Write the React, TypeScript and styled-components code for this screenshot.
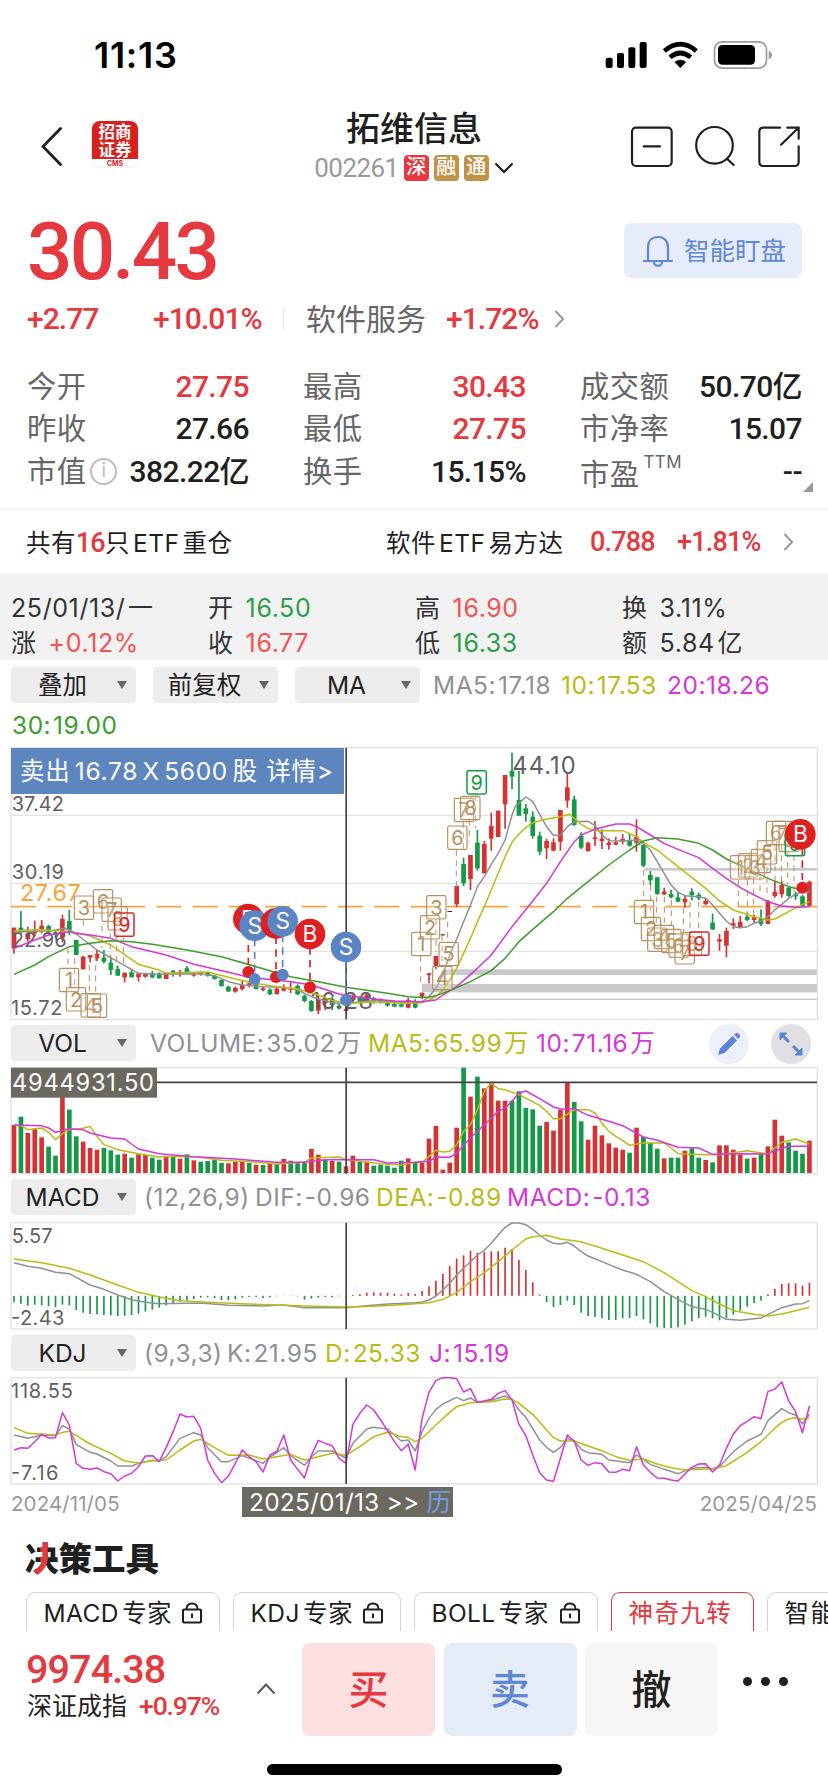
import React from "react";
import styled, { createGlobalStyle } from "styled-components";

const RED = "#e4393f";
const UP = "#d53234";
const DOWN = "#149a46";
const BLUE = "#5b84c2";
const GRAY = "#8d9095";
const YELLOW = "#b9bb14";
const PINK = "#d536d8";
const GREEN = "#3c9d2b";
const TAN = "#b68f5c";
const INK = "#1f1f1f";
const SANS = `Inter, "Noto Sans CJK SC", sans-serif`;
const DIN = `Roboto, "Noto Sans CJK SC", sans-serif`;

const Global = createGlobalStyle`
  * { box-sizing: border-box; }
  body { margin: 0; background: #fff; }
`;

const Screen = styled.div`
  width: 828px;
  height: 1792px;
  overflow: hidden;
  background: #fff;
  color: ${INK};
  font-family: ${SANS};
  display: flex;
  flex-direction: column;
  white-space: nowrap;
`;

const StatusBar = styled.div`
  height: 108px;
  flex: none;
  display: flex;
  justify-content: space-between;
  padding: 0 48px 0 94px;
`;
const Clock = styled.div`
  margin-top: 33px;
  font-size: 36px;
  line-height: 44px;
  font-weight: 600;
  letter-spacing: 0.7px;
  color: #000;
`;

const NavBar = styled.header`
  height: 88px;
  flex: none;
  display: flex;
  justify-content: space-between;
  padding: 0 27px 0 41px;
`;
const NavSide = styled.div`
  display: flex;
  width: 176px;
`;
const Logo = styled.div`
  width: 46px;
  height: 46px;
  margin: 13px 0 0 30px;
  border-radius: 8px;
  overflow: hidden;
  background: linear-gradient(#d8201f 0 38.5px, #fff 38.5px);
  box-shadow: 0 0 2px rgba(0, 0, 0, 0.2);
  color: #fff;
  font: 700 16.5px/18px ${SANS};
  text-align: center;
`;
const LogoLine = styled.div`
  height: 17.5px;
  &:first-child { margin-top: 2px; }
`;
const LogoMark = styled.div`
  font-size: 7px;
  line-height: 12px;
  color: #d8201f;
`;
const NavTitle = styled.div`
  display: flex;
  flex-direction: column;
  align-items: center;
`;
const StockName = styled.h1`
  margin: 0;
  font: 500 34px/42px ${SANS};
`;
const StockCode = styled.div`
  display: flex;
  align-items: center;
  height: 36px;
  font: 400 26px/36px ${DIN};
  letter-spacing: -0.55px;
  color: #999;
`;
const Tag = styled.span<{ $bg: string }>`
  width: 25px;
  height: 26px;
  margin-left: 5px;
  border-radius: 4px;
  background: ${(p) => p.$bg};
  color: #fff;
  font: 500 20px/25px ${SANS};
  letter-spacing: 0;
  text-align: center;
`;

const PriceRow = styled.div`
  height: 96px;
  flex: none;
  display: flex;
  justify-content: space-between;
  padding: 0 26px 0 27px;
`;
const Price = styled.div`
  font: 500 80px/112px ${DIN};
  letter-spacing: -2.8px;
  color: ${RED};
`;
const WatchButton = styled.button`
  width: 178px;
  height: 55px;
  margin-top: 27px;
  padding: 0 0 0 18px;
  border: 0;
  border-radius: 8px;
  background: #e6ecf9;
  color: #5f87d8;
  display: flex;
  align-items: center;
  gap: 10px;
  font: 400 25.5px/36px ${SANS};
`;

const ChangeRow = styled.div`
  height: 56px;
  flex: none;
  display: flex;
  align-items: center;
  padding: 0 0 2px 27px;
`;
const Change = styled.span<{ $w: number }>`
  width: ${(p) => p.$w}px;
  font: 500 30px/36px ${DIN};
  letter-spacing: -0.95px;
  color: ${RED};
`;
const Divider = styled.i`
  width: 1px;
  height: 22px;
  margin-right: 22px;
  background: #e6e6e6;
`;
const Sector = styled.span`
  width: 140px;
  font-size: 30px;
  line-height: 36px;
  color: #666;
`;

const Stats = styled.section`
  height: 162px;
  flex: none;
  padding: 17.5px 26px 0 27px;
  display: grid;
  grid-template-columns: 222px 223px 222px;
  grid-auto-rows: 42.6px;
  column-gap: 54px;
  position: relative;
  border-bottom: 2px solid #f5f5f5;
`;
const Stat = styled.div`
  display: flex;
  align-items: center;
  justify-content: space-between;
`;
const StatLabel = styled.span<{ $drop?: boolean }>`
  display: flex;
  align-items: center;
  margin-top: ${(p) => (p.$drop ? 6 : 0)}px;
  font-size: 29.3px;
  line-height: 36px;
  letter-spacing: 0.4px;
  color: #666;
  sup {
    align-self: flex-start;
    margin: -5px 0 0 4px;
    font-size: 17px;
    line-height: 20px;
  }
`;
const StatValue = styled.span<{ $up?: boolean }>`
  font: 500 30px/36px ${DIN};
  letter-spacing: -0.6px;
  color: ${(p) => (p.$up ? RED : INK)};
`;
const InfoDot = styled.i`
  width: 27px;
  height: 27px;
  margin-left: 4px;
  border: 2px solid #bbb;
  border-radius: 50%;
  font: 400 19px/22px ${SANS};
  color: #bbb;
  text-align: center;
`;
const Corner = styled.i`
  position: absolute;
  right: 15px;
  bottom: 16px;
  border: 5.5px solid #999;
  border-left-color: transparent;
  border-top-color: transparent;
`;

const EtfRow = styled.div`
  height: 63px;
  flex: none;
  display: flex;
  align-items: center;
  padding: 0 34px 0 26px;
  font-size: 24.5px;
  letter-spacing: 0.4px;
  word-spacing: -4px;
  b { font-weight: 500; color: ${RED}; font-family: ${DIN}; font-size: 27px; letter-spacing: -0.8px; }
`;
const EtfCount = styled.span`
  width: 360px;
`;
const EtfName = styled.span`
  width: 204px;
`;
const EtfValue = styled.b<{ $w: number }>`
  width: ${(p) => p.$w}px;
`;

const DayPanel = styled.section`
  height: 87px;
  flex: none;
  padding: 17px 12px 0 11px;
  background: #f2f2f2;
  display: grid;
  grid-template-columns: 197px 207px 207px 1fr;
  grid-auto-rows: 35px;
  font-size: 25px;
  line-height: 36px;
  letter-spacing: 0.6px;
  word-spacing: -5px;
  color: #333;
`;
const DayCell = styled.div<{ $c?: string }>`
  display: flex;
  gap: 12px;
  span { color: ${(p) => p.$c || "#333"}; }
`;

const ToolRow = styled.div<{ $h: number; $top: number }>`
  height: ${(p) => p.$h}px;
  flex: none;
  padding: ${(p) => p.$top}px 0 0 11px;
  display: flex;
`;
const Picker = styled.button<{ $mr: number }>`
  width: 125px;
  height: 36px;
  flex: none;
  margin-right: ${(p) => p.$mr}px;
  padding: 0 9px 0 0;
  border: 0;
  border-radius: 4px;
  background: #ededed;
  color: #222;
  font: 400 24.5px/36px ${SANS};
  display: flex;
  align-items: center;
`;
const PickerText = styled.span`
  flex: 1;
  padding-right: 3px;
  text-align: center;
`;
const Caret = styled.i`
  border: 5.5px solid transparent;
  border-top: 8px solid #666;
  border-bottom: 0;
`;
const Legend = styled.span<{ $c: string; $w?: number }>`
  flex: none;
  width: ${(p) => (p.$w ? p.$w + "px" : "auto")};
  font-size: 24.5px;
  line-height: 37px;
  letter-spacing: 0.5px;
  word-spacing: -5.5px;
  color: ${(p) => p.$c};
`;
const LegendLine = styled.div`
  height: 43px;
  flex: none;
  padding: 3px 0 0 12px;
`;
const RoundButton = styled.button<{ $bg: string; $ml: number }>`
  width: 40px;
  height: 40px;
  flex: none;
  margin: -1px 0 0 ${(p) => p.$ml}px;
  padding: 0;
  border: 0;
  border-radius: 50%;
  background: ${(p) => p.$bg};
  display: grid;
  place-items: center;
`;

const ChartBox = styled.div`
  position: relative;
  flex: none;
`;
const ChartSvg = styled.svg`
  display: block;
  font-family: ${SANS};
  overflow: visible;
`;
const TradeTip = styled.div`
  position: absolute;
  left: 11px;
  top: 1px;
  width: 333px;
  height: 46px;
  padding-left: 9px;
  background: #5d86be;
  color: #fff;
  font-size: 24.5px;
  line-height: 47px;
  letter-spacing: 0.7px;
  word-spacing: -3.2px;
  white-space: pre;
`;

const DateRow = styled.div`
  height: 49px;
  flex: none;
  padding: 2px 11px 0;
  display: flex;
  font-size: 20.5px;
  line-height: 34px;
  letter-spacing: 0.1px;
  color: #999;
`;
const StartDate = styled.span`
  width: 231px;
`;
const EndDate = styled.span`
  margin-left: auto;
`;
const DatePill = styled.span`
  width: 211px;
  height: 30px;
  padding-left: 7px;
  background: #6b6860;
  color: #fff;
  font-size: 24.5px;
  line-height: 31px;
  letter-spacing: 0.2px;
  em { font-style: normal; color: #6d9fe8; }
`;

const ToolsTitle = styled.h2`
  height: 58px;
  flex: none;
  margin: 0;
  padding-left: 25px;
  font: 900 33.5px/50px ${SANS};
`;
const AccentGlyph = styled.span`
  display: inline-block;
  position: relative;
  line-height: 50px;
  vertical-align: top;
  &::after {
    content: "决";
    position: absolute;
    left: 0;
    top: 0;
    color: ${RED};
    clip-path: polygon(46% 0, 68% 0, 68% 52%, 52% 100%, 22% 100%, 22% 70%, 46% 60%);
  }
`;
const Chips = styled.div`
  height: 39px;
  flex: none;
  padding: 0 0 0 25.5px;
  display: flex;
  gap: 13px;
  overflow: hidden;
`;
const Chip = styled.button<{ $w: number; $on?: boolean; $ls?: number }>`
  width: ${(p) => p.$w}px;
  height: 50px;
  flex: none;
  padding: 0 17px 8px 17px;
  border: 1.5px solid ${(p) => (p.$on ? RED : "#d2d2d2")};
  border-radius: 9px;
  background: #fff;
  color: ${(p) => (p.$on ? RED : INK)};
  font: 400 24.5px/36px ${SANS};
  letter-spacing: ${(p) => p.$ls ?? 0.4}px;
  word-spacing: -4px;
  display: flex;
  align-items: center;
  justify-content: space-between;
`;

const TradeBar = styled.footer`
  height: 119px;
  flex: none;
  padding: 12px 0 0 27px;
  display: flex;
`;
const IndexBlock = styled.div`
  width: 275px;
  position: relative;
`;
const IndexValue = styled.div`
  margin-left: -1px;
  font: 500 39.5px/54px ${DIN};
  letter-spacing: -0.9px;
  color: ${RED};
`;
const IndexName = styled.div`
  display: flex;
  font-size: 25px;
  line-height: 18px;
  b { margin-left: 12px; font: 500 26.5px/18px ${DIN}; letter-spacing: -1.1px; color: ${RED}; }
`;
const Expand = styled.svg`
  position: absolute;
  left: 229px;
  top: 40px;
`;
const TradeButton = styled.button<{ $bg: string; $c: string }>`
  width: 133px;
  height: 93px;
  margin-right: 8.5px;
  border: 0;
  padding: 0;
  border-radius: 8px;
  background: ${(p) => p.$bg};
  color: ${(p) => p.$c};
  font: 500 40px/93px ${SANS};
`;
const Dots = styled.div`
  display: flex;
  gap: 9px;
  margin: 34px 0 0 16px;
  i { width: 9px; height: 9px; border-radius: 50%; background: ${INK}; }
`;
const HomeBar = styled.div`
  width: 295px;
  height: 11px;
  flex: none;
  margin: 14px 0 0 267px;
  border-radius: 6px;
  background: #000;
`;

/* Charts are drawn in units of a third of a pixel; one candle every 20.75 units. */
const cx = (i: number) => 42 + 20.75 * i;
type Pt = [number, number];
const parse = (s: string): Pt[] =>
  s.trim().split(/\s+/).map((p) => p.split(",").map(Number) as Pt);

const Line = ({ d, c }: { d: string; c: string }) => (
  <polyline
    points={parse(d).map(([i, y]) => `${cx(i)},${y}`).join(" ")}
    fill="none"
    stroke={c}
    strokeWidth={4.5}
    strokeLinejoin="round"
  />
);

const candles = `r,578,578,640,656 g,528,578,592,595 r,575,595,612,620 r,557,585,595,605 r,555,572,583,595 g,570,573,590,598
g,585,592,600,610 r,540,552,608,622 g,525,558,585,600 g,615,615,660,660 r,663,665,703,703 r,660,660,668,682 r,645,657,670,678
g,645,668,680,685 g,665,683,705,720 g,692,702,722,722 r,713,713,727,742 g,703,712,727,727 r,713,716,727,740 r,713,717,725,728
g,708,715,727,730 g,712,715,730,730 r,712,714,732,732 g,705,708,712,725 r,705,710,714,725 g,693,700,713,715 r,713,716,722,725
r,710,713,718,722 g,711,713,722,725 g,720,722,732,734 g,733,735,753,755 g,752,755,769,771 r,755,759,770,773 r,738,750,762,767
r,738,745,753,757 g,738,742,762,763 r,755,760,765,769 g,760,764,778,780 r,757,761,777,779 r,748,757,767,769 r,742,760,764,774
g,748,752,778,780 g,779,782,798,802 g,795,798,828,830 r,783,795,827,837 r,785,790,805,825 g,785,792,810,825 g,803,812,820,823
r,800,822,828,832 r,780,785,795,805 g,785,788,798,805 r,775,780,795,800 g,785,790,800,806 g,790,795,802,806 g,797,803,812,815
g,797,807,815,817 g,800,808,815,817 r,788,795,818,820 g,793,800,818,820 r,772,774,785,792 r,713,715,720,745 r,662,663,693,703
k,598,598,601,601 k,528,528,531,531 r,453,453,508,516 g,368,387,445,453 r,360,360,432,465 g,285,323,400,407 r,318,327,415,415
r,233,273,311,347 r,227,227,306,306 r,120,120,208,281 g,53,108,125,162 g,108,195,242,242 g,207,220,237,260 g,229,245,303,311
g,290,302,350,360 r,312,318,340,372 r,310,322,347,349 r,225,225,320,347 r,115,157,197,218 g,182,193,270,272 g,292,302,338,342
r,320,323,348,350 r,258,307,312,333 r,283,311,318,342 r,310,323,330,344 r,305,322,329,330 r,297,312,320,328 g,297,315,332,335
r,253,305,323,350 g,320,330,392,397 g,408,420,436,450 g,426,427,477,479 r,458,470,478,480 g,465,477,487,490 g,470,487,500,502
r,482,492,502,518 g,460,470,480,495 g,473,480,490,495 r,490,498,507,511 g,536,563,583,585 r,597,613,620,647 r,578,588,632,667
r,550,565,572,582 r,543,560,577,578 g,535,545,555,558 r,540,547,555,563 g,523,550,567,573 r,495,497,567,567 r,437,470,483,488
r,437,450,478,488 g,455,458,483,487 g,470,478,484,495 g,480,484,515,517 r,437,440,512,515`
  .trim().split(/\s+/).map((s) => {
    const [k, ...v] = s.split(",");
    return { k, v: v.map(Number) };
  });
const tone: Record<string, string> = { r: UP, g: DOWN, k: "#333" };

const MA5 = "0,590 2,590 4,588 5.5,587 7.2,580 8,585 9,597 12,645 15,680 18,715 20,718 24,716 27,717 29,722 31,740 33,750 36,755 39,757 41,765 43,785 46,803 48,806 50,800 52,797 55,800 58,805 59,800 60,785 61,760 62,720 63,660 64,612 65,560 66,510 67,455 68,425 69,388 70,355 71,315 72,240 72.5,213 74,186 75,200 76,238 77,275 78,301 79,300 80,275 81,260 83,259 84,272 85,300 86,317 88,318 90,315 91,325 92,345 93,380 94,415 95,450 96,472 97,482 99,485 100,490 101,510 102,535 103,558 104,575 105,578 106,575 107,565 108,558 109,545 110,525 111,508 112,490 113,478 114,470 115,470";
const MA10 = "0,588 2,585 4,584 7,588 9,593 11,603 14,630 18,688 21,706 22,714 28,711 31,727 34,742 38,755 41,762 44,780 46,797 49,805 52,800 56,805 59,803 60,795 61,785 62,765 63,735 64,700 65,655 66,610 67,560 68,515 69,465 70,415 71,365 72,322 73,297 74,278 75,263 77,252 79,245 80.3,238 81,250 82,268 83,280 84,287 88,287 90,305 91,323 93,345 96,395 100,460 102,498 104,525 107,545 109,555 110,552 112,530 114,508 115,500";
const MA20 = "0,640 3,615 5,600 8,590 9,595 11,600 14,610 17,635 22,660 26,688 31,712 34,727 40,740 43,750 47,777 51,790 55,798 59,800 61,795 62,780 64,755 67,700 69,660 72,575 75,498 77,445 79,380 81,320 82,300 84,283 86,272 87,267 89,267 90,275 92,300 94,325 96,343 99,368 101,400 103,430 105,458 107,480 109,500 111,513 113,517 115,515";
const MA30 = "0,718 3,690 5,665 8,635 11,625 14,617 17,620 20,628 25,645 30,665 35,695 40,725 44,740 48,757 54,775 57,785 58,787 60,787 61,782 63,767 66,740 69,707 71,670 73,620 76,565 78,530 80,490 83,440 86,390 89,345 91,318 93,308 96,312 99,325 101,345 103,372 106,400 109,430 112,455 114,465 115,463";

const T = TAN;
const marks: [string, number, number, string][] = [
  ["3", 252, 518, T], ["6", 309, 499, T], ["7", 335, 524, T], ["8", 353, 550, T], ["9", 373, 569, "#d52b2b"],
  ["1", 207, 735, T], ["2", 228, 793, T], ["4", 272, 811, T], ["5", 291, 812, T],
  ["1", 1264, 627, T], ["2", 1290, 577, T], ["3", 1309, 517, T], ["4", 1327, 729, T], ["5", 1346, 657, T],
  ["6", 1372, 308, T], ["7", 1392, 225, T], ["8", 1411, 219, T], ["9", 1430, 142, DOWN],
  ["1", 1932, 531, T], ["2", 1953, 582, T], ["3", 1972, 614, T], ["4", 1992, 606, T], ["5", 2014, 618, T],
  ["6", 2036, 632, T], ["7", 2054, 652, T], ["8", 2076, 627, T], ["9", 2098, 626, "#d52b2b"],
  ["1", 2220, 397, T], ["2", 2245, 391, T], ["3", 2264, 397, T], ["4", 2283, 378, T], ["5", 2301, 352, T],
  ["6", 2328, 294, T], ["7", 2347, 294, T], ["8", 2366, 315, T], ["9", 2385, 327, DOWN],
];
const drops = parse("250,555,575 306,572,640 331,595,680 350,600,700 370,605,690 204,640,700 224,670,760 268,690,775 287,660,775 1262,662,750 1369,345,455 1390,262,350 1408,255,320 1427,180,280 1343,560,620 1308,553,650 1326,600,690 1931,405,495 1952,450,545 1970,485,580 1993,485,572 2014,495,580 2050,520,600 2070,500,590 2096,500,590 2215,435,520 2242,435,535 2261,430,545 2280,420,470 2301,395,475 2325,330,440 2344,330,440 2363,350,455 2382,360,470") as unknown as [number, number, number][];

const trades: [string, number, number, number, string][] = [
  ["B", 745, 552, 711, "#de2022"], ["S", 764, 572, 732, BLUE], ["B", 828, 565, 726, "#de2022"],
  ["S", 848, 559, 719, BLUE], ["B", 930, 597, 757, "#de2022"], ["S", 1038, 636, 795, BLUE], ["B", 2401, 298, 458, "#de2022"],
];

const PriceChart = () => (
  <ChartBox>
    <ChartSvg width="828" height="278" viewBox="0 36 2484 834">
      <g fill="#c9c9c9">
        <rect x="1266" y="747" width="1185" height="25" />
        <rect x="1330" y="703" width="1121" height="17" />
        <rect x="1933" y="399" width="518" height="8" />
        <rect x="1290" y="791" width="1161" height="4" />
      </g>
      <g stroke="#e2e2e2" strokeWidth="4" fill="none">
        <path d="M33 241H2452M33 445H2452M33 649H2452" />
        <rect x="33" y="38" width="2419" height="815" />
      </g>
      <path d="M33 515H2451" stroke="#f6a540" strokeWidth="5" strokeDasharray="75 34" />
      <text x="60" y="498" fontSize="70" fill="#f6a540" textLength="182">27.67</text>
      {candles.map(({ k, v }, i) => (
        <g key={i} fill={tone[k]}>
          <rect x={cx(i) - 2.5} y={v[0]} width="5" height={v[3] - v[0]} />
          <rect x={cx(i) - 7} y={v[1]} width="14" height={v[2] - v[1]} />
        </g>
      ))}
      <g fill="#5f5f5f" fontSize="60">
        <text x="35" y="229" textLength="157">37.42</text>
        <text x="35" y="433" textLength="157">30.19</text>
        <text x="35" y="637" textLength="165">22.96</text>
        <text x="33" y="841" textLength="154">15.72</text>
        <text x="1537" y="116" fontSize="71" textLength="190">44.10</text>
        <text x="932" y="822" fontSize="70" textLength="187">16.28</text>
      </g>
      <Line d={MA5} c={GRAY} />
      <Line d={MA10} c={YELLOW} />
      <Line d={MA20} c={PINK} />
      <Line d={MA30} c={GREEN} />
      {drops.map(([x, a, b], i) => (
        <path key={i} d={`M${x} ${a}V${b}`} stroke={TAN} strokeWidth="3" strokeDasharray="17 14" />
      ))}
      {marks.map(([n, x, y, c], i) => (
        <g key={i}>
          <rect x={x - 29} y={y - 35} width="58" height="70" rx="5" fill="#fff" fillOpacity="0.2" stroke={c} strokeWidth={c === T ? 3.5 : 4.5} />
          <text x={x} y={y + 22} fontSize="60" fill={c} textAnchor="middle">{n}</text>
        </g>
      ))}
      <path d="M1038.5 38V853" stroke="#444" strokeWidth="5" />
      {trades.map(([n, x, y, dot, c], i) => (
        <g key={i}>
          <path d={`M${x + (i === 6 ? 6 : 0)} ${y + 40}V${dot}`} stroke={c} strokeWidth="5" strokeDasharray="22 16" />
          <circle cx={x + (i === 6 ? 6 : 0)} cy={dot} r="18" fill={c} />
          <circle cx={x} cy={y} r="46" fill={c} />
          <text x={x} y={y + 24} fontSize="68" fill="#fff" textAnchor="middle">{n}</text>
        </g>
      ))}
    </ChartSvg>
    <TradeTip>{"卖出 16.78 X 5600 股  详情>"}</TradeTip>
  </ChartBox>
);

const volumes = "r316 g291 r340 r327 r353 g381 g408 r230 g270 g350 r366 r385 r390 g385 g392 g405 r402 g414 r404 r406 g414 g420 r410 g411 r417 g404 r422 g426 g424 g420 g430 r431 r427 r426 g430 r435 g436 r432 g433 r418 g423 g428 g430 r388 r405 g420 r424 g426 r440 r408 g426 r426 g438 g435 g438 g444 g423 r416 g430 r430 r357 r319 r450 r429 r324 g144 r231 g171 r206 r190 r243 r243 g243 g215 g265 g269 g318 r307 r333 r270 r190 g247 g305 r360 r318 r347 r371 r384 r390 g399 r324 g352 g370 g387 r416 g414 g414 r393 g386 g414 r421 g428 r377 r377 r390 r405 g417 r414 g403 r380 r300 r348 g368 g393 g402 r363".split(" ");

const VolumeChart = () => (
  <ChartSvg width="828" height="108" viewBox="0 142 2484 324">
    <rect x="33" y="144" width="2419" height="318" fill="none" stroke="#e2e2e2" strokeWidth="4" />
    {volumes.map((v, i) => (
      <rect key={i} x={cx(i) - 7} width="14" y={+v.slice(1)} height={460 - +v.slice(1)} fill={tone[v[0]]} />
    ))}
    <Line c={YELLOW} d="0,316 1,318 2,330 4,325 5,338 6,360 7,342 8,330 9,328 10,326 11,320 12,350 13,375 15,390 18,402 21,412 24,410 27,413 30,422 34,426 38,433 42,428 43,415 47,412 48,420 50,425 53,432 56,436 58,428 59,428 60,410 61,392 62,397 63,395 64,375 65,335 66,315 67,270 68,215 69,190 70,207 71,210 73,225 76,257 77,275 78,297 79,297 81,270 83,270 84,280 85,310 86,335 87,350 88,362 89,377 91,370 94,370 95,385 96,402 100,405 102,405 106,393 109,403 110,385 111,368 113,358 115,373" />
    <Line c={PINK} d="0,316 4,318 5,325 6,338 8,327 10,330 11,340 14,355 16,358 18,388 21,402 26,411 32,418 38,428 42,428 45,420 52,420 54,430 58,428 60,425 61,412 63,413 64,400 66,355 68,315 70,275 71,265 72,245 73,220 74,214 76,237 78,262 79,268 81,267 83,287 86,305 88,318 91,352 93,362 96,383 99,385 101,404 105,402 109,403 110,393 112,380 115,380" />
    <path d="M471 188H2451M1038.5 144V462" stroke="#444" strokeWidth="5" />
    <rect x="33" y="144" width="438" height="90" fill="#6b6860" />
    <text x="36" y="215" fontSize="71" fill="#fff" textLength="426">4944931.50</text>
  </ChartSvg>
);

const macdBars = "127 131 137 134 136 138 141 134 136 150 158 162 163 165 166 168 167 165 161 155 149 143 136 130 125 121 117 113 112 114 120 121 118 113 111 111 114 112 109 108 108 109 119 116 113 111 112 109 110 105 103 98 97 98 98 101 103 99 102 93 79 62 42 18 -4 -14 -28 -22 -24 -26 -26 -37 -33 0 30 67 104 126 141 135 122 135 158 168 171 175 180 180 175 174 168 178 190 202 204 204 202 194 184 174 170 175 181 174 164 152 140 129 122 103 87 72 70 70 77 68".split(" ").map(Number);

const MacdChart = () => (
  <ChartSvg width="828" height="108" viewBox="0 -114 2484 324">
    <rect x="33" y="-112" width="2419" height="319" fill="none" stroke="#e2e2e2" strokeWidth="4" />
    {macdBars.map((y, i) => (
      <rect key={i} x={cx(i) - 2.5} width="5" y={Math.min(y, 107.5)} height={Math.abs(107.5 - y)} fill={y > 107 ? DOWN : UP} />
    ))}
    <Line c={GRAY} d="0,8 2,19 4,25 6,37 8,41 9,52 11,75 13,88 15,105 17,119 19,127 21,131 27,129 31,136 36,138 39,135 42,143 48,143 51,137 54,132 58,128 59,126 60,120 61,108 62,90 63,70 64,45 65,25 66,5 67,-15 68,-30 69,-50 70,-75 71,-98 72,-111 73,-111 74,-106 75,-92 76,-75 77,-60 78,-50 79,-48 80,-53 81,-42 82,-25 83,-12 85,5 87,22 88,30 90,43 92,65 94,95 96,118 98,140 100,148 101,157 103,178 105,181 108,174 111,143 113,132 114,131 115,122" />
    <Line c={YELLOW} d="0,-3 4,8 8,25 11,45 15,75 18,97 21,111 24,122 28,127 34,132 42,138 48,141 52,139 56,134 60,128 62,118 64,98 66,65 68,38 70,5 72,-30 74,-63 75,-70 77,-74 79,-63 82,-55 85,-35 88,-15 91,5 94,38 96,65 98,92 100,110 102,132 104,152 107,163 109,168 111,162 113,152 115,142" />
    <g fill="#5f5f5f" fontSize="60">
      <text x="35" y="-52" textLength="123">5.57</text>
      <text x="33" y="195" textLength="160">-2.43</text>
    </g>
    <path d="M1038.5 -112V207" stroke="#444" strokeWidth="5" />
  </ChartSvg>
);

const KdjChart = () => (
  <ChartSvg width="828" height="108" viewBox="0 351 2484 324">
    <rect x="33" y="353" width="2419" height="319" fill="none" stroke="#e2e2e2" strokeWidth="4" />
    <Line c={GRAY} d="0,525 2,535 4,525 6,527 7,497 8,507 9,553 11,577 12,582 14,603 15,618 17,618 18,610 20,601 21,604 22,590 24,535 26,518 27,525 28,563 30,605 31,605 33,587 36,610 37,592 39,563 40,587 42,616 43,590 44,573 46,573 48,594 49,550 51,507 52,502 54,507 56,543 57,540 58,573 59,515 60,475 61,448 62,432 63,422 64,412 65,422 66,414 67,427 69,421 71,408 72,418 73,450 74,472 76,540 77,562 78,577 79,562 80,535 81,543 82,568 83,578 85,583 86,600 89,608 90,585 92,613 94,628 96,641 98,625 100,622 101,627 102,620 104,575 106,543 108,523 109,482 111,446 112,458 113,465 114,492 115,462" />
    <Line c={YELLOW} d="0,503 2,520 6,525 7,517 8,514 11,552 14,580 16,603 18,609 20,602 22,600 24,570 26,543 27,538 29,563 31,586 34,585 36,597 38,590 40,583 42,600 44,590 46,580 48,586 50,560 52,530 54,517 56,530 57,532 58,545 59,535 61,495 63,457 64,440 66,428 69,425 71,417 72,418 73,430 75,463 77,510 78,533 79,543 81,543 83,558 85,572 87,590 89,601 91,597 93,612 95,623 97,630 101,626 103,617 106,577 108,545 110,505 111,487 112,477 113,473 114,478 115,474" />
    <Line c={PINK} d="0,570 1,563 2,565 3,545 4,523 5,534 6,533 7,458 8,495 9,610 10,625 11,628 12,624 13,635 14,641 15,663 16,648 17,640 18,620 19,588 20,587 21,604 22,563 23,515 24,462 25,471 26,469 27,505 28,600 29,640 30,668 31,648 32,610 33,570 34,590 35,605 36,636 37,585 38,574 39,525 40,600 41,628 42,654 43,585 44,541 45,550 46,557 47,595 48,610 49,493 50,460 51,435 52,450 53,480 54,512 55,545 56,572 57,552 58,630 59,475 60,397 61,362 62,353 63,353 64,356 65,396 66,386 67,427 68,423 69,418 70,400 71,392 72,420 73,493 74,527 75,585 76,638 77,660 78,664 79,595 80,525 81,543 82,600 83,616 84,608 85,611 86,636 87,637 88,628 89,632 90,560 91,615 92,637 93,654 94,655 95,660 96,663 97,642 98,622 99,612 100,611 101,636 102,615 103,565 104,522 105,497 106,484 107,470 108,476 109,395 110,387 111,366 112,423 113,455 114,518 115,438" />
    <g fill="#5f5f5f" fontSize="60">
      <text x="33" y="413" textLength="186">118.55</text>
      <text x="33" y="659" textLength="142">-7.16</text>
    </g>
    <path d="M1038.5 353V672" stroke="#444" strokeWidth="5" />
  </ChartSvg>
);

const Chevron = ({ ml = 0 }: { ml?: number }) => (
  <svg width="11" height="18" viewBox="0 0 11 18" style={{ marginLeft: ml }}>
    <path d="M1.5 1L9 9L1.5 17" fill="none" stroke="#999" strokeWidth="2" />
  </svg>
);
const Lock = () => (
  <svg width="20" height="22" viewBox="0 0 20 22" fill="none" stroke={INK} strokeWidth="2">
    <rect x="1" y="7.5" width="18" height="13" rx="1" />
    <path d="M4.5 7.5C4.5 3.5 7 1.5 10 1.5S15.5 3.5 15.5 7.5M10 11.5V16" />
  </svg>
);
const Pick = ({ label, mr }: { label: string; mr: number }) => (
  <Picker $mr={mr}>
    <PickerText>{label}</PickerText>
    <Caret />
  </Picker>
);

const stats: [string, string, boolean][] = [
  ["今开", "27.75", true], ["最高", "30.43", true], ["成交额", "50.70亿", false],
  ["昨收", "27.66", false], ["最低", "27.75", true], ["市净率", "15.07", false],
  ["市值", "382.22亿", false], ["换手", "15.15%", false], ["市盈", "--", false],
];

export default function App() {
  return (
    <Screen>
      <Global />
      <StatusBar>
        <Clock>11:13</Clock>
        <svg width="180" height="44" viewBox="0 6 540 132" style={{ marginTop: 32 }}>
          <g>
            <rect x="17" y="83" width="21" height="31" rx="6" />
            <rect x="51" y="69" width="21" height="45" rx="6" />
            <rect x="85" y="52" width="21" height="62" rx="6" />
            <rect x="119" y="36" width="21" height="78" rx="6" />
          </g>
          <path d="M241 114L224 96Q241 84 258 96Z" stroke="#000" strokeWidth="1" />
          <g fill="none" stroke="#000" strokeWidth="14">
            <path d="M193 63Q241 22 289 63" />
            <path d="M210 82Q241 56 272 82" />
          </g>
          <rect x="343.5" y="35.5" width="156" height="79" rx="23" fill="none" stroke="#9b9b9b" strokeWidth="5" />
          <rect x="354" y="45" width="111" height="59" rx="13" />
          <path d="M506 62Q516 66 516 75T506 88Z" fill="#9b9b9b" />
        </svg>
      </StatusBar>

      <NavBar>
        <NavSide>
          <svg width="21" height="40" viewBox="0 0 21 40" style={{ marginTop: 19 }}>
            <path d="M19.5 1.5L2 19.5L19.5 37.5" fill="none" stroke={INK} strokeWidth="2.8" strokeLinecap="round" />
          </svg>
          <Logo>
            <LogoLine>招商</LogoLine>
            <LogoLine>证券</LogoLine>
            <LogoMark>CMS</LogoMark>
          </Logo>
        </NavSide>
        <NavTitle>
          <StockName>拓维信息</StockName>
          <StockCode>
            002261
            <Tag $bg={RED}>深</Tag>
            <Tag $bg="#c19247">融</Tag>
            <Tag $bg="#c19247">通</Tag>
            <svg width="20" height="12" viewBox="0 0 20 12" style={{ marginLeft: 5 }}>
              <path d="M1.5 1.5L10 10L18.5 1.5" fill="none" stroke={INK} strokeWidth="2.2" />
            </svg>
          </StockCode>
        </NavTitle>
        <svg width="190" height="60" viewBox="33 249 570 180" style={{ marginTop: 5 }} fill="none" stroke={INK} strokeWidth="6.5" strokeLinecap="round">
          <rect x="96" y="293" width="119" height="115" rx="12" />
          <path d="M131 349H180" />
          <circle cx="343.5" cy="346" r="55" />
          <path d="M381 386L401 405" />
          <path d="M540 293H490Q478 293 478 305V396Q478 408 490 408H584Q596 408 596 396V349M562 293H596V326M594 295L543 344" />
        </svg>
      </NavBar>

      <PriceRow>
        <Price>30.43</Price>
        <WatchButton>
          <svg width="32" height="32" viewBox="0 0 32 32" fill="none" stroke="#5f87d8" strokeWidth="2.2" strokeLinecap="round">
            <path d="M6 26V12.5C6 6 10 2 16 2S26 6 26 12.5V26M2 26H30M12 27C12 32 20 32 20 27" />
          </svg>
          智能盯盘
        </WatchButton>
      </PriceRow>

      <ChangeRow>
        <Change $w={126}>+2.77</Change>
        <Change $w={130}>+10.01%</Change>
        <Divider />
        <Sector>软件服务</Sector>
        <Change $w={94}>+1.72%</Change>
        <Chevron ml={14} />
      </ChangeRow>

      <Stats>
        {stats.map(([label, value, up]) => (
          <Stat key={label}>
            <StatLabel $drop={label === "市盈"}>
              {label}
              {label === "市值" && <InfoDot>i</InfoDot>}
              {label === "市盈" && <sup>TTM</sup>}
            </StatLabel>
            <StatValue $up={up}>{value}</StatValue>
          </Stat>
        ))}
        <Corner />
      </Stats>

      <EtfRow>
        <EtfCount>共有<b>16</b>只 ETF 重仓</EtfCount>
        <EtfName>软件 ETF 易方达</EtfName>
        <EtfValue $w={87}>0.788</EtfValue>
        <EtfValue $w={106}>+1.81%</EtfValue>
        <Chevron />
      </EtfRow>

      <DayPanel>
        <DayCell>25/01/13/ 一</DayCell>
        <DayCell $c="#2a9d48">开<span>16.50</span></DayCell>
        <DayCell $c="#f35353">高<span>16.90</span></DayCell>
        <DayCell>换<span>3.11%</span></DayCell>
        <DayCell $c="#f35353">涨<span>+0.12%</span></DayCell>
        <DayCell $c="#f35353">收<span>16.77</span></DayCell>
        <DayCell $c="#2a9d48">低<span>16.33</span></DayCell>
        <DayCell>额<span>5.84 亿</span></DayCell>
      </DayPanel>

      <ToolRow $h={44} $top={7}>
        <Pick label="叠加" mr={17} />
        <Pick label="前复权" mr={17} />
        <Pick label="MA" mr={13} />
        <Legend $c={GRAY} $w={128}>MA5: 17.18</Legend>
        <Legend $c={YELLOW} $w={106}>10: 17.53</Legend>
        <Legend $c={PINK}>20:18.26</Legend>
      </ToolRow>
      <LegendLine><Legend $c={GREEN}>30: 19.00</Legend></LegendLine>
      <PriceChart />

      <ToolRow $h={42} $top={0}>
        <Pick label="VOL" mr={14} />
        <Legend $c={GRAY} $w={218}>VOLUME: 35.02 万</Legend>
        <Legend $c={YELLOW} $w={168}>MA5: 65.99 万</Legend>
        <Legend $c={PINK} $w={123}>10: 71.16 万</Legend>
        <RoundButton $bg="#ebf0fb" $ml={50}>
          <svg width="24" height="24" viewBox="0 0 24 24" fill="#5b83d6">
            <path d="M1 23L3 16.5L15.5 4L20 8.5L7.5 21ZM17 2.5L19 1Q20 .5 21 1.3L22.7 3Q23.5 4 22.7 5L21.5 7Z" />
          </svg>
        </RoundButton>
        <RoundButton $bg="#e0e0e4" $ml={22}>
          <svg width="24" height="24" viewBox="0 0 24 24" fill="#5b83d6" stroke="#5b83d6">
            <path d="M1 1H8L1 8ZM23 23V16L16 23Z" />
            <path d="M3 3L10 10M14 14L21 21" strokeWidth="3" />
          </svg>
        </RoundButton>
      </ToolRow>
      <VolumeChart />

      <ToolRow $h={47} $top={4}>
        <Pick label="MACD" mr={8} />
        <Legend $c={GRAY} $w={111}>(12,26,9)</Legend>
        <Legend $c={GRAY} $w={121}>DIF: -0.96</Legend>
        <Legend $c={YELLOW} $w={131}>DEA: -0.89</Legend>
        <Legend $c={PINK}>MACD: -0.13</Legend>
      </ToolRow>
      <MacdChart />

      <ToolRow $h={47} $top={5}>
        <Pick label="KDJ" mr={8} />
        <Legend $c={GRAY} $w={83}>(9,3,3)</Legend>
        <Legend $c={GRAY} $w={98}>K: 21.95</Legend>
        <Legend $c={YELLOW} $w={104}>D: 25.33</Legend>
        <Legend $c={PINK}>J: 15.19</Legend>
      </ToolRow>
      <KdjChart />

      <DateRow>
        <StartDate>2024/11/05</StartDate>
        <DatePill>2025/01/13 &gt;&gt; <em>历</em></DatePill>
        <EndDate>2025/04/25</EndDate>
      </DateRow>

      <ToolsTitle><AccentGlyph>决</AccentGlyph>策工具</ToolsTitle>
      <Chips>
        <Chip $w={194}>MACD 专家<Lock /></Chip>
        <Chip $w={168}>KDJ 专家<Lock /></Chip>
        <Chip $w={184}>BOLL 专家<Lock /></Chip>
        <Chip $w={143} $on $ls={1.4}>神奇九转</Chip>
        <Chip $w={143} $ls={1.4}>智能诊股</Chip>
      </Chips>

      <TradeBar>
        <IndexBlock>
          <IndexValue>9974.38</IndexValue>
          <IndexName>深证成指<b>+0.97%</b></IndexName>
          <Expand width="20" height="12" viewBox="0 0 20 12">
            <path d="M1.5 10.5L10 1.5L18.5 10.5" fill="none" stroke="#555" strokeWidth="2" />
          </Expand>
        </IndexBlock>
        <TradeButton $bg="#fbdfe1" $c="#e4393f">买</TradeButton>
        <TradeButton $bg="#e5ebf7" $c="#5f87d3">卖</TradeButton>
        <TradeButton $bg="#f6f6f6" $c={INK}>撤</TradeButton>
        <Dots><i /><i /><i /></Dots>
      </TradeBar>
      <HomeBar />
    </Screen>
  );
}
